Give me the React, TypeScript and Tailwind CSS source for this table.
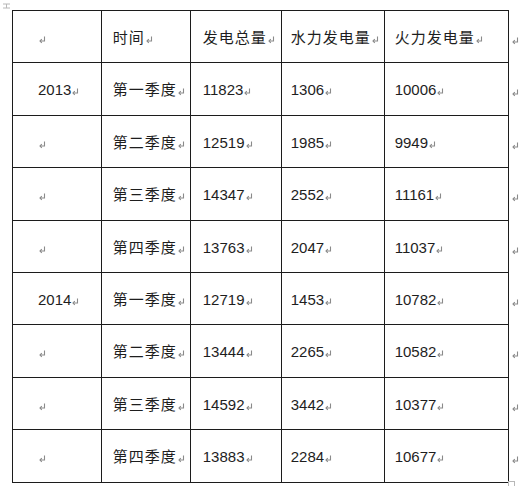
import React from 'react';

const rows: [string, string, string, string, string][] = [
  ['', '时间', '发电总量', '水力发电量', '火力发电量'],
  ['2013', '第一季度', '11823', '1306', '10006'],
  ['', '第二季度', '12519', '1985', '9949'],
  ['', '第三季度', '14347', '2552', '11161'],
  ['', '第四季度', '13763', '2047', '11037'],
  ['2014', '第一季度', '12719', '1453', '10782'],
  ['', '第二季度', '13444', '2265', '10582'],
  ['', '第三季度', '14592', '3442', '10377'],
  ['', '第四季度', '13883', '2284', '10677'],
];

// Word-style paragraph mark
function Mark() {
  return (
    <svg width="7" height="8" viewBox="0 0 7 8" className="inline-block ml-[1px] align-[-1px]">
      <path d="M5.5 0.5 V5 H1.2" fill="none" stroke="#8a8a8a" strokeWidth="1.1" />
      <path d="M2.8 3.2 L1 5 L2.8 6.8" fill="none" stroke="#8a8a8a" strokeWidth="1.1" />
    </svg>
  );
}

const colW = ['w-[89px]', 'w-[89px]', 'w-[91px]', 'w-[103px]', 'w-[125px]'];
const padL = ['pl-[25px]', 'pl-[11px]', 'pl-[12px]', 'pl-[9px]', 'pl-[10px]'];

export default function App() {
  return (
    <div
      className="relative w-[520px] h-[486px] bg-white overflow-hidden pt-[10px] pl-[12px] text-[#1e1e1e] text-[15px]"
      style={{ fontFamily: '"Liberation Sans", "Noto Sans CJK SC", sans-serif' }}
    >
      {/* table move handle */}
      <svg width="10" height="6" viewBox="0 0 10 6" className="absolute left-[2px] top-[3px]">
        <path d="M1 1 H8 M4.5 1 V5 M1 5 H8" fill="none" stroke="#b8b8b8" strokeWidth="1" />
      </svg>

      <table className="table-fixed border-collapse">
        <tbody>
          {rows.map((r, i) => (
            <tr key={i} className="h-[52.4px]">
              {r.map((c, j) => (
                <td
                  key={j}
                  className={`${colW[j]} ${padL[j]} p-0 border border-[#1c1c1c] align-middle whitespace-nowrap pt-[3px] ${
                    /[\u4e00-\u9fff]/.test(c) ? 'tracking-[1px]' : ''
                  }`}
                >
                  {c}
                  <Mark />
                </td>
              ))}
              <td className="w-[11px] p-0 pl-[2px] align-middle pt-[5px]">
                <Mark />
              </td>
            </tr>
          ))}
        </tbody>
      </table>

      {/* resize handle */}
      <div className="absolute left-[508px] top-[481px] w-[7px] h-[7px] border border-[#b8b8b8] bg-white" />
    </div>
  );
}
